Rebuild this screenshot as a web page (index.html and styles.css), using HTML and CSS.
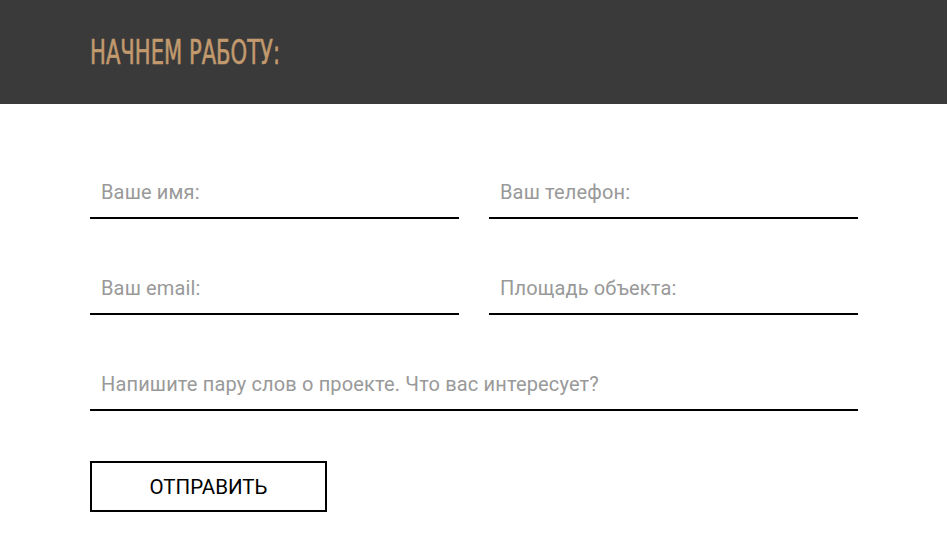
FILE: index.html
```html
<!DOCTYPE html>
<html lang="ru">
<head>
    <meta charset="UTF-8">
    <meta name="viewport" content="width=device-width, initial-scale=1.0">
    <title>Начнем работу</title>
    <link rel="stylesheet" href="styles.css">
</head>
<body>
    <header class="top">
        <h2 class="top-title"><span>НАЧНЕМ РАБОТУ:</span></h2>
    </header>

    <form class="order-form" action="#" method="post">
        <div class="form-grid">
            <input type="text" name="name" placeholder="Ваше имя:">
            <input type="text" name="phone" placeholder="Ваш телефон:">
            <input type="text" name="email" placeholder="Ваш email:">
            <input type="text" name="area" placeholder="Площадь объекта:">
            <input class="wide" type="text" name="message" placeholder="Напишите пару слов о проекте. Что вас интересует?">
        </div>
        <button type="submit">ОТПРАВИТЬ</button>
    </form>
</body>
</html>
```

FILE: styles.css
```css
body {
    font-family: Roboto, "Noto Sans", sans-serif;
    background-color: #fff;
    margin: 0;
    padding: 0;
}

.top {
    background-color: #3a3a3a;
    height: 104px;
    padding: 0 90px;
    display: flex;
    align-items: center;
}

.top-title {
    margin: 0;
    font-family: "DejaVu Sans", sans-serif;
    font-stretch: condensed;
    font-weight: normal;
    font-size: 34px;
    line-height: 1;
    color: #c29a6e;
    -webkit-text-stroke: 0.6px #c29a6e;
}

.top-title span {
    display: inline-block;
    transform: scaleX(0.69);
    transform-origin: left center;
    white-space: nowrap;
    margin-top: -2px;
}

.order-form {
    padding: 50px 90px 0;
    width: 768px;
}

.form-grid {
    display: grid;
    grid-template-columns: 1fr 1fr;
    column-gap: 30px;
    row-gap: 31px;
}

.form-grid .wide {
    grid-column: 1 / 3;
}

input[type="text"] {
    box-sizing: border-box;
    width: 100%;
    height: 65px;
    padding: 12px 11px 0;
    border: none;
    border-bottom: 2px solid #000;
    outline: none;
    font-family: Roboto, "Noto Sans", sans-serif;
    font-size: 20px;
    letter-spacing: 0.15px;
    color: #333;
    background: transparent;
}

input::placeholder {
    color: #999;
}

button {
    margin-top: 50px;
    width: 237px;
    height: 51px;
    background-color: #fff;
    border: 2px solid #000;
    font-family: Roboto, "Noto Sans", sans-serif;
    font-size: 20.5px;
    color: #000;
    cursor: pointer;
}
```
